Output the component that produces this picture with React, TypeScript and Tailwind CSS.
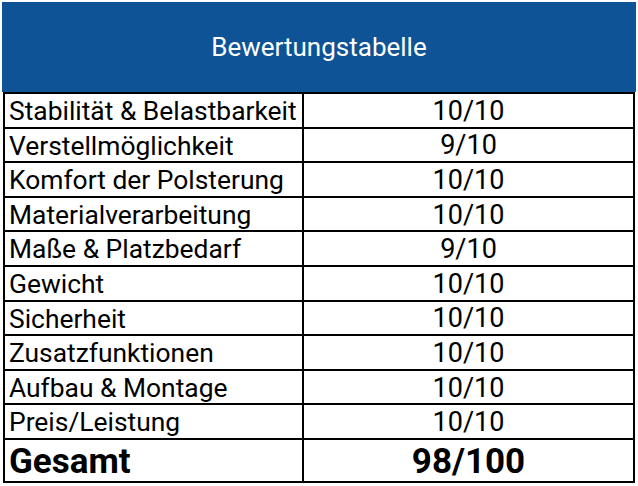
import React from 'react';

const rows = [
  ['Stabilität & Belastbarkeit', '10/10'],
  ['Verstellmöglichkeit', '9/10'],
  ['Komfort der Polsterung', '10/10'],
  ['Materialverarbeitung', '10/10'],
  ['Maße & Platzbedarf', '9/10'],
  ['Gewicht', '10/10'],
  ['Sicherheit', '10/10'],
  ['Zusatzfunktionen', '10/10'],
  ['Aufbau & Montage', '10/10'],
  ['Preis/Leistung', '10/10'],
];

export default function App() {
  return (
    <div className="w-[638px] h-[486px] bg-white pt-[2px] pl-[2px] font-['Roboto',sans-serif] text-black">
      <div className="w-[634px] h-[90px] bg-[#0e5396] flex items-center justify-center text-white text-[26px]">
        Bewertungstabelle
      </div>
      <div className="w-[632px] ml-[1px] border-2 border-black">
        {rows.map(([label, score], i) => (
          <div key={i} className="flex h-[34.6px] border-b-2 border-black">
            <div className="w-[299px] border-r-2 border-black pl-[4px] pt-[2px] flex items-center text-[26.4px] leading-none">
              {label}
            </div>
            <div className="flex-1 flex items-center justify-center pt-[2px] text-[27px] leading-none">
              {score}
            </div>
          </div>
        ))}
        <div className="flex h-[41px]">
          <div className="w-[299px] border-r-2 border-black pl-[4px] pt-[2px] flex items-center text-[35px] font-bold leading-none">
            Gesamt
          </div>
          <div className="flex-1 flex items-center justify-center pt-[2px] text-[35px] font-bold leading-none">
            98/100
          </div>
        </div>
      </div>
    </div>
  );
}
